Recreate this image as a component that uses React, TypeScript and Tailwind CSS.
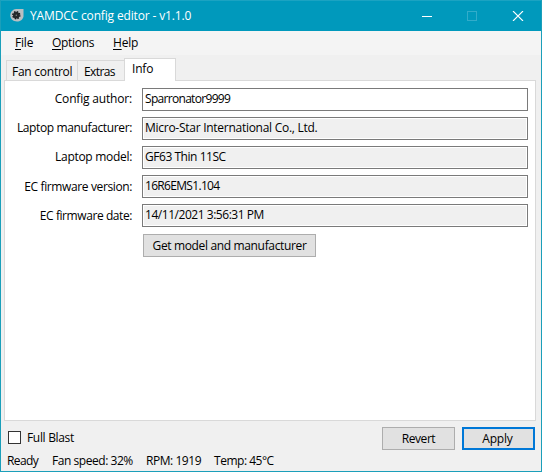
import type { ReactNode } from "react";

const fields = [
  { label: "Config author:", labelStyle: "pt-[3px] tracking-[-0.18px]", value: "Sparronator9999", track: "tracking-[-0.69px]", editable: true },
  { label: "Laptop manufacturer:", labelStyle: "pt-[3px] tracking-[-0.37px]", value: "Micro-Star International Co., Ltd.", track: "tracking-[-0.27px]" },
  { label: "Laptop model:", labelStyle: "pt-[3px] tracking-[-0.3px]", value: "GF63 Thin 11SC", track: "tracking-[-0.46px]" },
  { label: "EC firmware version:", labelStyle: "pt-[4px] tracking-[-0.38px]", value: "16R6EMS1.104", track: "tracking-[-0.68px]" },
  { label: "EC firmware date:", labelStyle: "pt-[4px] tracking-[-0.42px]", value: "14/11/2021 3:56:31 PM", track: "tracking-[-0.46px]" },
];

function TitleBar() {
  return (
    <header className="-mx-px flex h-[31px] shrink-0 items-center border-t border-[#1ba3c2] bg-[#0099bc] text-white">
      <svg className="-mt-px ml-[10px] h-[13px] w-[14px]" viewBox="0 0 14 13">
        <path d="M6 0H13.5V7.5C13 10.5 10 12.5 7 12.5C3 12.5 .3 9.8 .3 6.3C.3 2.8 3 .3 6 0Z" fill="#b9bfc2" />
        <circle cx="6.3" cy="6.2" r="3.2" fill="#24282a" />
        <circle cx="6.3" cy="6.2" r="3.5" fill="none" stroke="#15191b" strokeWidth="1.4" strokeDasharray="1.5 1.25" />
        <circle cx="6.3" cy="6.2" r=".7" fill="#888" />
      </svg>
      <h1 className="ml-[6px] flex-1 whitespace-nowrap tracking-[-0.15px]">YAMDCC config editor - v1.1.0</h1>
      <svg className="mr-[18px] h-[10px] w-[102px]" viewBox="0 0 102 10" fill="none">
        <path d="M0 5.5H10" stroke="white" shapeRendering="crispEdges" />
        <rect x="45.5" y=".5" width="9" height="9" stroke="#32acca" />
        <path d="M91 0L101 10M101 0L91 10" stroke="white" strokeWidth="1.1" />
      </svg>
    </header>
  );
}

function Mnemonic({ text, className }: { text: string; className: string }) {
  return (
    <span className={`whitespace-nowrap ${className}`}>
      <span className="underline underline-offset-2">{text[0]}</span>
      {text.slice(1)}
    </span>
  );
}

function Button({ children, className }: { children: ReactNode; className: string }) {
  return (
    <button className={`flex h-[23px] items-center justify-center whitespace-nowrap bg-[#e1e1e1] leading-4 ${className}`}>
      {children}
    </button>
  );
}

export default function App() {
  return (
    <div className="flex h-[472px] w-[542px] flex-col overflow-hidden border-x border-b border-[#1b9fba] bg-[#f0f0f0] font-['Open_Sans','Noto_Sans',sans-serif] text-[12px] leading-4 text-black">
      <TitleBar />
      <nav className="flex h-6 shrink-0 items-center bg-[#f4f4f4] pl-[14px]">
        <Mnemonic text="File" className="w-[37px] tracking-[-0.2px]" />
        <Mnemonic text="Options" className="w-[61px] tracking-[-0.3px]" />
        <Mnemonic text="Help" className="tracking-[-0.2px]" />
      </nav>
      <div className="mt-[3px] flex h-[23px] shrink-0 items-end pl-[5px]">
        <div className="mb-px flex h-[20px] w-[71px] items-center whitespace-nowrap border-l border-t border-[#d9d9d9] pl-[5px] pt-[2px] tracking-[-0.25px]">Fan control</div>
        <div className="mb-px flex h-[20px] w-[47px] items-center whitespace-nowrap border-l border-t border-[#d9d9d9] pl-[6px] pt-[2px] tracking-[-0.6px]">Extras</div>
        <div className="z-10 h-[23px] w-[52px] border-x border-t border-[#d9d9d9] bg-white pl-[7px] pt-[2px] tracking-[-0.2px]">Info</div>
      </div>
      <main className="-mt-px ml-[3px] flex h-[341px] w-[532px] shrink-0 flex-col border border-[#d9d9d9] bg-white pt-[7px]">
        <div className="flex flex-col gap-[6px]">
          {fields.map((f) => (
            <div key={f.label} className="flex h-[23px]">
              <label className={`w-[127px] whitespace-nowrap text-right ${f.labelStyle}`}>{f.label}</label>
              <div className="ml-[10px] w-[386px] whitespace-nowrap border border-[#7a7a7a] bg-white p-px">
                <div className={`h-full pl-px pt-px ${f.track} ${f.editable ? "bg-white" : "bg-[#f0f0f0]"}`}>{f.value}</div>
              </div>
            </div>
          ))}
        </div>
        <Button className="ml-[138px] mt-[7px] w-[173px] border border-[#adadad] tracking-[-0.35px]">Get model and manufacturer</Button>
      </main>
      <div className="mt-[6px] flex h-[23px] shrink-0 items-center pl-[7px] pr-[6px]">
        <span className="-mt-[2px] h-[13px] w-[13px] border border-[#333] bg-white" />
        <span className="-mt-px ml-[6px] flex-1 tracking-[-0.32px]">Full Blast</span>
        <Button className="w-[73px] border border-[#adadad] tracking-[-0.45px]">Revert</Button>
        <Button className="ml-[7px] w-[73px] border-2 border-[#0078d7] pr-[2px] tracking-[-0.2px]">Apply</Button>
      </div>
      <footer className="mt-[3px] flex whitespace-nowrap pl-[6px]">
        <span className="w-[45px] tracking-[-0.6px]">Ready</span>
        <span className="w-[94px] tracking-[-0.45px]">Fan speed: 32%</span>
        <span className="w-[68px] tracking-[-0.45px]">RPM: 1919</span>
        <span className="tracking-[-0.48px]">Temp: 45°C</span>
      </footer>
    </div>
  );
}
